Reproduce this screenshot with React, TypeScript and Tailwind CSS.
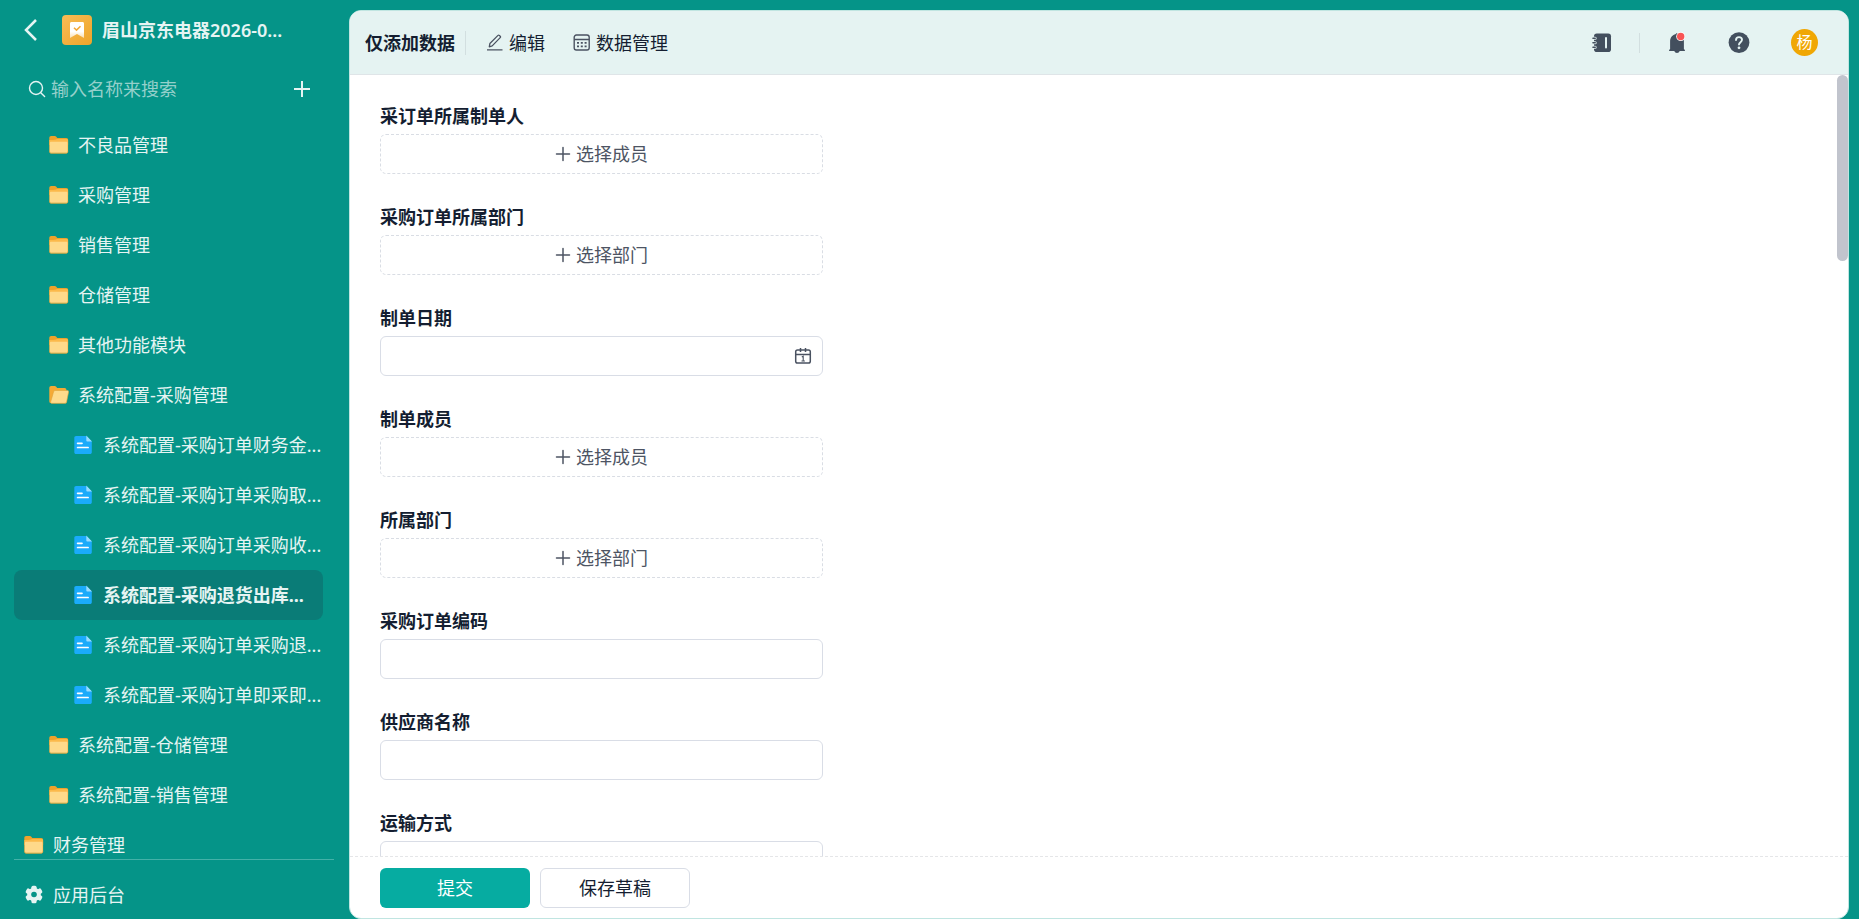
import { useState } from 'react';
import type { FormEvent, ReactNode } from 'react';

type MenuItem = {
  id: number;
  name: string;
  kind: 'folder' | 'open' | 'form';
  level: 0 | 1 | 2;
};

type Field = {
  id: string;
  label: string;
  kind: 'picker' | 'date' | 'text';
  action?: string;
};

const menuItems: MenuItem[] = [
  { id: 1, name: '不良品管理', kind: 'folder', level: 1 },
  { id: 2, name: '采购管理', kind: 'folder', level: 1 },
  { id: 3, name: '销售管理', kind: 'folder', level: 1 },
  { id: 4, name: '仓储管理', kind: 'folder', level: 1 },
  { id: 5, name: '其他功能模块', kind: 'folder', level: 1 },
  { id: 6, name: '系统配置-采购管理', kind: 'open', level: 1 },
  { id: 7, name: '系统配置-采购订单财务金...', kind: 'form', level: 2 },
  { id: 8, name: '系统配置-采购订单采购取...', kind: 'form', level: 2 },
  { id: 9, name: '系统配置-采购订单采购收...', kind: 'form', level: 2 },
  { id: 10, name: '系统配置-采购退货出库...', kind: 'form', level: 2 },
  { id: 11, name: '系统配置-采购订单采购退...', kind: 'form', level: 2 },
  { id: 12, name: '系统配置-采购订单即采即...', kind: 'form', level: 2 },
  { id: 13, name: '系统配置-仓储管理', kind: 'folder', level: 1 },
  { id: 14, name: '系统配置-销售管理', kind: 'folder', level: 1 },
  { id: 15, name: '财务管理', kind: 'folder', level: 0 },
];

const fields: Field[] = [
  { id: 'creator', label: '采订单所属制单人', kind: 'picker', action: '选择成员' },
  { id: 'orderDept', label: '采购订单所属部门', kind: 'picker', action: '选择部门' },
  { id: 'date', label: '制单日期', kind: 'date' },
  { id: 'member', label: '制单成员', kind: 'picker', action: '选择成员' },
  { id: 'dept', label: '所属部门', kind: 'picker', action: '选择部门' },
  { id: 'orderNo', label: '采购订单编码', kind: 'text' },
  { id: 'supplier', label: '供应商名称', kind: 'text' },
  { id: 'shipping', label: '运输方式', kind: 'text' },
];

const indent = {
  0: 'pl-[10px]',
  1: 'pl-[35px]',
  2: 'pl-[60px]',
};

function FolderIcon() {
  return (
    <svg viewBox="0 0 20 20" className="size-5 shrink-0">
      <path d="M.3 3C.3 1.800 1 1 2.200 1h3.600c.6 0 1.100.2 1.500.7l1 1.200h8.900c1.300 0 1.900.7 1.900 1.900V10H.3z" fill="#f0a22b" />
      <path d="M.3 5C3 5 6.500 5.200 8 4h9.500c1 0 1.600.6 1.600 1.600v11c0 1-.7 1.800-1.800 1.800H2.100c-1.100 0-1.800-.7-1.800-1.800z" fill="#fbb94b" />
      <path d="M.9 7.800c0-.7.400-1.100 1.100-1.100h15.400c.7 0 1.100.4 1.100 1.100v8.900c0 .8-.5 1.300-1.300 1.300h-15c-.8 0-1.300-.5-1.300-1.300z" fill="#fed98a" />
      <path d="M.6 16.500c0 1 .6 1.600 1.600 1.600h15c1 0 1.600-.6 1.600-1.600" fill="none" stroke="#cfa443" strokeWidth=".8" />
    </svg>
  );
}

function OpenFolderIcon() {
  return (
    <svg viewBox="0 0 20 20" className="size-5 shrink-0">
      <path d="M.3 3C.3 1.800 1 1 2.200 1h3.500c.6 0 1.100.2 1.500.7l1 1.200h7.300c1.200 0 1.900.7 1.900 1.900v13.400H2.200c-1.200 0-1.900-.7-1.900-1.900z" fill="#f5aa35" />
      <path d="M4.600 6.700c.2-.8.700-1.200 1.500-1.200h12.300c1 0 1.400.6 1.200 1.500l-2 9.900c-.2.900-.8 1.400-1.700 1.400H2.900c-1 0-1.400-.6-1.200-1.500z" fill="#fedb8c" stroke="#dfa43a" strokeWidth=".6" />
    </svg>
  );
}

function FormIcon() {
  return (
    <svg viewBox="0 0 20 20" className="size-5 shrink-0">
      <path d="M.3 2.800C.3 1.700 1 1 2.100 1H12.300l5.500 5.500v10.700c0 1.100-.7 1.800-1.800 1.800H2.100c-1.100 0-1.800-.7-1.800-1.800z" fill="#1aabfb" />
      <path d="M12.300.6v4.600c0 .8.500 1.300 1.300 1.300h4.400z" fill="#9adcff" />
      <path d="M3.600 8.300h4.400M3.600 12.500h10.500" stroke="#fff" strokeWidth="1.700" strokeLinecap="round" />
    </svg>
  );
}

function GearIcon() {
  return (
    <svg viewBox="0 0 20 20" className="size-5 shrink-0">
      <g fill="#e6f4f3">
        <circle cx="10" cy="9.500" r="6.800" />
        <rect x="7.400" y=".7" width="5.200" height="17.600" rx="1.600" />
        <rect x="7.400" y=".7" width="5.200" height="17.600" rx="1.600" transform="rotate(60 10 9.500)" />
        <rect x="7.400" y=".7" width="5.200" height="17.600" rx="1.600" transform="rotate(120 10 9.500)" />
      </g>
      <circle cx="10" cy="9.500" r="2.800" fill="#059488" />
    </svg>
  );
}

function PlusIcon({ className }: { className: string }) {
  return (
    <svg viewBox="0 0 16 16" className={className}>
      <path d="M8 1.500v13M1.500 8h13" fill="none" stroke="currentColor" strokeWidth="1.500" strokeLinecap="round" />
    </svg>
  );
}

function FieldBlock({ field, children }: { field: Field; children: ReactNode }) {
  return (
    <div className="flex flex-col">
      <label htmlFor={field.id} className="mb-[6px] h-6 font-bold text-[#141e31]">
        {field.label}
      </label>
      {children}
    </div>
  );
}

export default function App() {
  const [activeId, setActiveId] = useState(10);
  const [search, setSearch] = useState('');
  const [values, setValues] = useState<Record<string, string>>({});

  const handleChange = (id: string, value: string) => {
    setValues(prev => ({ ...prev, [id]: value }));
  };

  const handleSubmit = (e: FormEvent) => {
    e.preventDefault();
  };

  return (
    <div className="flex h-screen overflow-hidden bg-[#059488] font-['Noto_Sans','Noto_Sans_CJK_SC',sans-serif] text-[18px] leading-6">
      {/* Sidebar */}
      <aside className="flex w-[349px] shrink-0 flex-col text-[#e6f4f3]">
        <div className="flex h-[60px] items-center pl-5">
          <button type="button" aria-label="返回" className="mr-[18px]">
            <svg viewBox="0 0 24 24" className="size-6">
              <path d="M16 2 6 12l10 10" fill="none" stroke="currentColor" strokeWidth="2.500" />
            </svg>
          </button>
          <svg viewBox="0 0 30 30" className="mr-[10px] size-[30px]">
            <defs>
              <linearGradient id="logo" x1="0" y1="0" x2="1" y2="1">
                <stop offset="0" stopColor="#f8bc55" />
                <stop offset="1" stopColor="#eea42a" />
              </linearGradient>
              <linearGradient id="ribbon" x1="0" y1="0" x2="0" y2="1">
                <stop offset="0.600" stopColor="#fff" />
                <stop offset="1" stopColor="#fff" stopOpacity="0.600" />
              </linearGradient>
            </defs>
            <rect width="30" height="30" rx="4" fill="url(#logo)" />
            <path d="M8 8.500C8 7.600 8.600 7 9.500 7h11c.9 0 1.500.6 1.500 1.500V23l-7-4-7 4z" fill="url(#ribbon)" />
            <path d="m12 12.800 2.500 2.300 4-3.800" fill="none" stroke="#f2a93a" strokeWidth="1.500" />
          </svg>
          <h1 className="font-bold">
            眉山京东电器<span className="font-semibold">2026-0...</span>
          </h1>
        </div>

        <div className="flex h-[58px] items-center pr-[38px] pl-[28px]">
          <svg viewBox="0 0 18 18" className="size-[18px] shrink-0">
            <circle cx="8" cy="8" r="6.500" fill="none" stroke="currentColor" strokeWidth="1.400" />
            <path d="m13 13 3.600 3.600" stroke="currentColor" strokeWidth="1.400" strokeLinecap="round" />
          </svg>
          <input
            type="text"
            aria-label="搜索"
            placeholder="输入名称来搜索"
            value={search}
            onChange={e => setSearch(e.target.value)}
            className="ml-[5px] h-8 min-w-0 flex-1 bg-transparent outline-none placeholder:text-[#95d0cb]"
          />
          <button type="button" aria-label="新建">
            <svg viewBox="0 0 18 18" className="size-[18px]">
              <path d="M9 1v16M1 9h16" stroke="currentColor" strokeWidth="2" />
            </svg>
          </button>
        </div>

        <nav className="min-h-0 flex-1 overflow-hidden pt-[2px] pr-[26px] pl-[14px]">
          {menuItems.map(item => (
            <button
              key={item.id}
              type="button"
              onClick={() => setActiveId(item.id)}
              className={`flex h-[50px] w-full items-center gap-[9px] rounded-lg text-left whitespace-nowrap ${indent[item.level]} ${
                item.id === activeId ? 'bg-[#0a7c77] font-bold' : ''
              }`}
            >
              {item.kind === 'folder' && <FolderIcon />}
              {item.kind === 'open' && <OpenFolderIcon />}
              {item.kind === 'form' && <FormIcon />}
              <span>{item.name}</span>
            </button>
          ))}
        </nav>

        <div className="mr-[15px] ml-[14px] h-[60px] border-t border-[#44b1a8] pt-[10px]">
          <button type="button" className="flex h-[50px] w-full items-center gap-[9px] pl-[10px]">
            <GearIcon />
            <span>应用后台</span>
          </button>
        </div>
      </aside>

      {/* Form panel */}
      <main className="mt-[10px] mr-[10px] flex min-w-0 flex-1 flex-col overflow-hidden rounded-xl border border-[#c0e5e1] bg-white">
        <header className="flex h-16 shrink-0 items-center border-b border-[#dfe5e8] bg-[#e5f3f2] pr-[30px] pl-[15px] text-[#141e31]">
          <h2 className="font-bold">仅添加数据</h2>
          <div className="mr-5 ml-[10px] h-6 w-px bg-[#d2dfe0]" />
          <button type="button" className="mr-[28px] flex items-center gap-[5px]">
            <svg viewBox="0 0 18 18" className="size-[18px]" fill="none" stroke="#4a5261" strokeWidth="1.300">
              <path d="M1 15.800h15.500" />
              <path d="m3.300 12.800.6-3.300L12 1.400c.4-.4.900-.4 1.300 0l.9.9c.4.4.4.900 0 1.300l-8 8.300z" strokeLinejoin="round" />
            </svg>
            编辑
          </button>
          <button type="button" className="flex items-center gap-[5px]">
            <svg viewBox="0 0 18 18" className="size-[18px]" fill="none" stroke="#4a5261" strokeWidth="1.400">
              <rect x="1.200" y="1" width="15" height="15" rx="2.200" />
              <path d="M1.200 5.500h15" />
              <path d="M4 8.800h2M7.800 8.800h2M11.600 8.800h2M4 12.300h2M7.800 12.300h2M11.600 12.300h2" strokeWidth="1.800" />
            </svg>
            数据管理
          </button>

          <div className="ml-auto flex items-center">
            <button type="button" aria-label="通讯录" className="mr-[27px]">
              <svg viewBox="0 0 20 20" className="size-5">
                <rect x="2" y=".5" width="17" height="18.500" rx="2.800" fill="#434f5e" />
                <path d="M1 5.200h2.200M1 9.700h2.200M1 14.200h2.200" stroke="#e5f3f2" strokeWidth="3" strokeLinecap="round" />
                <path d="M1 5.200h2.200M1 9.700h2.200M1 14.200h2.200" stroke="#434f5e" strokeWidth="1.600" strokeLinecap="round" />
                <path d="M14 5v9.500" stroke="#e5f3f2" strokeWidth="2" strokeLinecap="round" />
              </svg>
            </button>
            <div className="mr-7 h-5 w-px bg-[#d2dfe0]" />
            <button type="button" aria-label="消息" className="mr-[42px]">
              <svg viewBox="0 0 18 22" className="h-[22px] w-[18px]">
                <path d="M9 1c.7 0 1 .4 1.200 1 3.300.8 5.700 3.600 5.700 7.200V17l1 1.100V19h-5.200c-.5 1.200-1.400 2-2.700 2s-2.200-.8-2.700-2H1.100v-.9L2.100 17V9.200c0-3.600 2.400-6.400 5.700-7.200C8 1.400 8.300 1 9 1z" fill="#434f5e" />
                <circle cx="12.700" cy="4.500" r="4.500" fill="#fff" />
                <circle cx="12.700" cy="4.500" r="3.700" fill="#f85454" />
              </svg>
            </button>
            <button type="button" aria-label="帮助" className="mr-[41px]">
              <svg viewBox="0 0 22 22" className="size-[22px]">
                <circle cx="11" cy="10.600" r="10.400" fill="#434f5e" />
                <path d="M8 8C8 6.200 9.300 5.100 11 5.100s3 1.100 3 2.700c0 2.300-3 2.400-3 4.800" fill="none" stroke="#e5f3f2" strokeWidth="1.900" strokeLinecap="round" />
                <circle cx="11" cy="15.800" r="1.400" fill="#e5f3f2" />
              </svg>
            </button>
            <button type="button" className="size-[27px] rounded-full bg-[#f0a704] text-[16px] leading-[27px] text-white">
              杨
            </button>
          </div>
        </header>

        <form onSubmit={handleSubmit} className="flex min-h-0 flex-1 flex-col">
          <div className="flex min-h-0 flex-1 justify-between overflow-hidden">
            <div className="ml-[30px] flex w-[443px] flex-col gap-[31px] pt-[29px]">
              {fields.map(field => (
                <FieldBlock key={field.id} field={field}>
                  {field.kind === 'picker' && (
                    <button
                      id={field.id}
                      type="button"
                      className="flex h-10 items-center justify-center gap-[5px] rounded-md border border-dashed border-[#d9dde4] text-[#4d5463]"
                    >
                      <PlusIcon className="size-4" />
                      {field.action}
                    </button>
                  )}
                  {field.kind === 'date' && (
                    <div className="flex h-10 items-center rounded-md border border-[#d9dde6] pr-[10px] pl-3">
                      <input
                        id={field.id}
                        type="text"
                        value={values[field.id] ?? ''}
                        onChange={e => handleChange(field.id, e.target.value)}
                        className="h-8 min-w-0 flex-1 outline-none"
                      />
                      <button type="button" aria-label="选择日期">
                        <svg viewBox="0 0 18 18" className="size-[18px]" fill="none" stroke="#4a5261" strokeWidth="1.500">
                          <rect x="1.700" y="3" width="14.600" height="13" rx="1.800" />
                          <path d="M1.700 7.400h14.600M6.500 1v4M11.500 1v4" />
                          <path d="M7.800 9.900 9.200 9.200v4.800M7.500 14h3.400" strokeWidth="1.100" />
                        </svg>
                      </button>
                    </div>
                  )}
                  {field.kind === 'text' && (
                    <input
                      id={field.id}
                      type="text"
                      value={values[field.id] ?? ''}
                      onChange={e => handleChange(field.id, e.target.value)}
                      className="h-10 shrink-0 rounded-md border border-[#d9dde6] px-3 outline-none"
                    />
                  )}
                </FieldBlock>
              ))}
            </div>
            {/* Scroll thumb */}
            <div className="h-[186px] w-[11px] rounded-full bg-[#c1c4cd]" />
          </div>

          <div className="flex shrink-0 gap-[10px] border-t border-dashed border-[#e5e6e8] pt-[11px] pb-[10px] pl-[30px]">
            <button type="submit" className="h-10 w-[150px] rounded-md bg-[#06aca1] text-white">
              提交
            </button>
            <button type="button" className="h-10 w-[150px] rounded-md border border-[#d9dde6] bg-white text-[#141e31]">
              保存草稿
            </button>
          </div>
        </form>
      </main>
    </div>
  );
}
